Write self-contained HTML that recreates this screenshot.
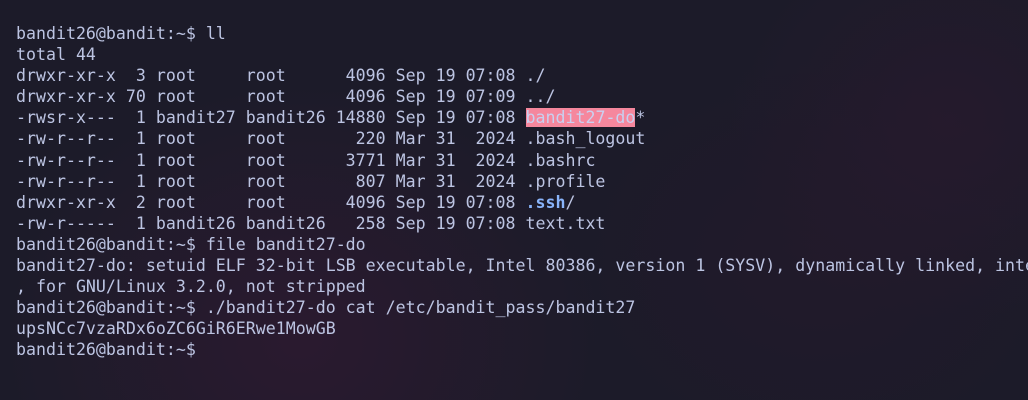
<!DOCTYPE html>
<html><head><meta charset="utf-8"><style>
html,body{margin:0;padding:0;}
body{width:1028px;height:400px;overflow:hidden;background:#1c1b29;
background-image:radial-gradient(ellipse 300px 260px at 300px 340px,rgba(60,25,55,0.45),transparent),
radial-gradient(ellipse 220px 200px at 950px 120px,rgba(50,25,50,0.4),transparent),
radial-gradient(ellipse 250px 200px at 820px 260px,rgba(45,22,45,0.3),transparent);
position:relative;}
pre{position:absolute;left:16px;top:23px;width:1012px;overflow:hidden;margin:0;font-family:"DejaVu Sans Mono","Liberation Mono",monospace;font-size:16.6px;line-height:21.1px;color:#bcc4e2;white-space:pre;}
.h{background:#f5879d;color:#c9d0f0;}
.b{color:#89b4fa;font-weight:bold;}
</style></head><body><pre>bandit26@bandit:~$ ll
total 44
drwxr-xr-x  3 root     root      4096 Sep 19 07:08 ./
drwxr-xr-x 70 root     root      4096 Sep 19 07:09 ../
-rwsr-x---  1 bandit27 bandit26 14880 Sep 19 07:08 <span class="h">bandit27-do</span>*
-rw-r--r--  1 root     root       220 Mar 31  2024 .bash_logout
-rw-r--r--  1 root     root      3771 Mar 31  2024 .bashrc
-rw-r--r--  1 root     root       807 Mar 31  2024 .profile
drwxr-xr-x  2 root     root      4096 Sep 19 07:08 <span class="b">.ssh</span>/
-rw-r-----  1 bandit26 bandit26   258 Sep 19 07:08 text.txt
bandit26@bandit:~$ file bandit27-do
bandit27-do: setuid ELF 32-bit LSB executable, Intel 80386, version 1 (SYSV), dynamically linked, inte
, for GNU/Linux 3.2.0, not stripped
bandit26@bandit:~$ ./bandit27-do cat /etc/bandit_pass/bandit27
upsNCc7vzaRDx6oZC6GiR6ERwe1MowGB
bandit26@bandit:~$
</pre></body></html>
